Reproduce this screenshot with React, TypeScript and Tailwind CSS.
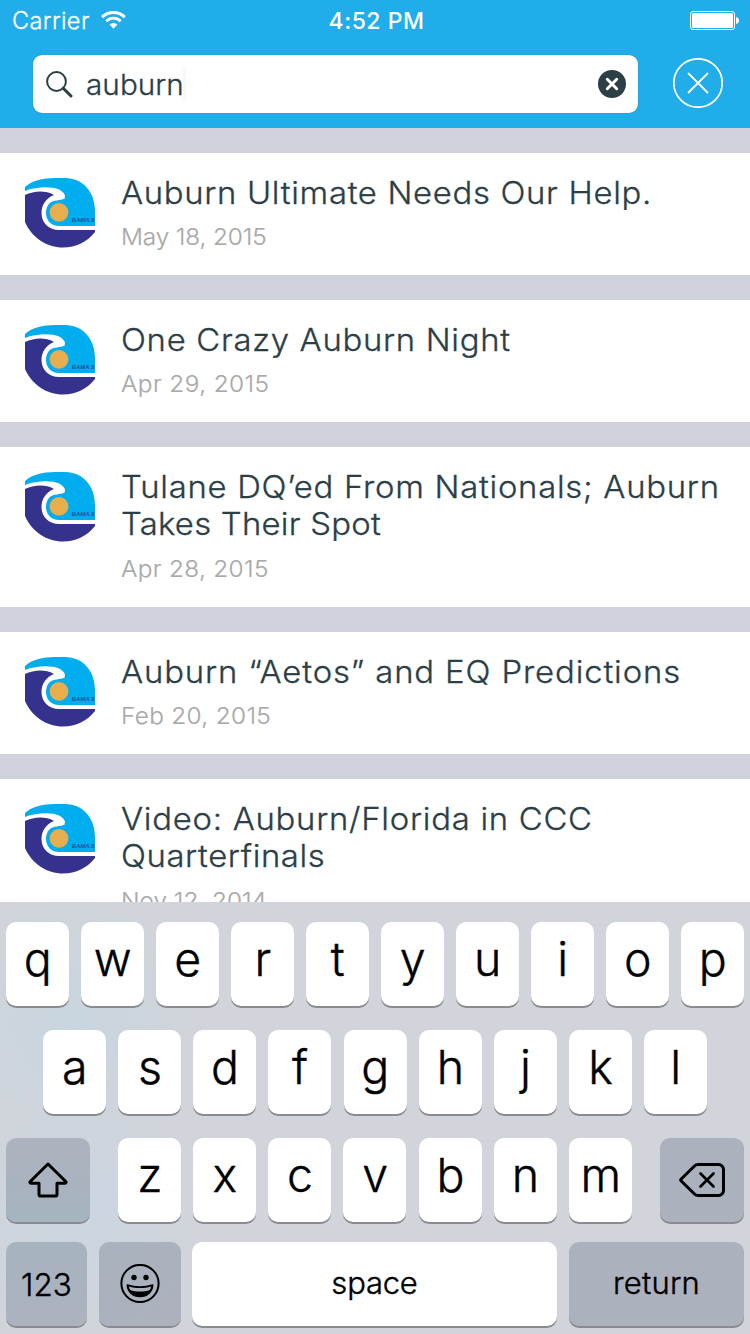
import React from "react";

type Post = { lines: { text: string; track: string }[]; date: string; dateTrack: string; height: string };

const posts: Post[] = [
  { lines: [{ text: "Auburn Ultimate Needs Our Help.", track: "tracking-[0.630px]" }], date: "May 18, 2015", dateTrack: "tracking-[-0.120px]", height: "h-[122px]" },
  { lines: [{ text: "One Crazy Auburn Night", track: "tracking-[0.650px]" }], date: "Apr 29, 2015", dateTrack: "tracking-[0.380px]", height: "h-[122px]" },
  { lines: [{ text: "Tulane DQ’ed From Nationals; Auburn", track: "tracking-[0.680px]" }, { text: "Takes Their Spot", track: "tracking-[0.220px]" }], date: "Apr 28, 2015", dateTrack: "tracking-[0.300px]", height: "h-[160px]" },
  { lines: [{ text: "Auburn “Aetos” and EQ Predictions", track: "tracking-[0.820px]" }], date: "Feb 20, 2015", dateTrack: "tracking-[0.300px]", height: "h-[122px]" },
  { lines: [{ text: "Video: Auburn/Florida in CCC", track: "tracking-[0.680px]" }, { text: "Quarterfinals", track: "tracking-[0.560px]" }], date: "Nov 12, 2014", dateTrack: "tracking-[-0.020px]", height: "h-[160px]" },
];

function Logo() {
  return (
    <svg viewBox="0 0 70 70" className="h-[70px] w-[70px] shrink-0">
      <path d="M0 9C6 3 18 0 30 0h10C58 0 70 14 70 33v15H34C26 48 21 42 21 35C21 28 25 23 31 22.500L38.500 21C42 18.500 39 14 34 11.500C26 8 10 9 0 13Z" fill="#00adee" />
      <path d="M31 22.500C28 20.500 31 17.500 36 17L40 20.500L38.500 21Z" fill="#fff" />
      <path d="M0 17C9 13 20 12 29 17C21 20 16.500 27 16.500 35C16.500 45 24 52 34 52H70V54C62 64 51 69.500 38 69.500C22 69.500 7 60 0 44Z" fill="#35328e" />
      <circle cx="34" cy="34.300" r="9.400" fill="#e8ad4d" />
      <text x="46.800" y="44" fontFamily="Liberation Sans, sans-serif" fontSize="5.700" fontWeight="bold" fontStyle="italic" fill="#24519e" textLength="23" lengthAdjust="spacingAndGlyphs">BAMA S</text>
    </svg>
  );
}

function PostCard({ post }: { post: Post }) {
  return (
    <article className={`flex shrink-0 items-start bg-white pt-[25px] pl-[25px] ${post.height}`}>
      <Logo />
      <div className="-mt-[4px] ml-[25.500px] origin-left scale-x-[1.06] whitespace-nowrap">
        <h2 className="text-[31px] leading-[37px] font-light text-[#2c3e46] [-webkit-text-stroke:0.3px_#2c3e46]">
          {post.lines.map((line) => (
            <span key={line.text} className={`block ${line.track}`}>{line.text}</span>
          ))}
        </h2>
        <p className={`text-[23px] leading-[28px] font-light text-[#a9a9a9] [-webkit-text-stroke:0.2px_#a9a9a9] ${post.lines.length > 1 ? "mt-[13px]" : "mt-[12px]"} ${post.dateTrack}`}>{post.date}</p>
      </div>
    </article>
  );
}

function Key({ children, className = "w-[63px] bg-white pb-[9px] text-[46.500px] tracking-[-0.500px]" }: { children?: React.ReactNode; className?: string }) {
  return (
    <div className={`flex h-[84px] shrink-0 items-center justify-center rounded-[10px] font-light text-black shadow-[0_2px_0_#898b8f] [-webkit-text-stroke:0.4px_black] ${className}`}>
      {children}
    </div>
  );
}

export default function App() {
  return (
    <div className="flex h-[1334px] w-[750px] flex-col overflow-hidden bg-[#cfd2da] font-['Inter',sans-serif]">
      <header className="h-[128px] shrink-0 bg-[#20ade9] text-white">
        <div className="grid h-[40px] grid-cols-3 items-center pr-[11px] pl-[12px] text-[23px]">
          <div className="flex items-center gap-[11px] pt-px">
            <span className="text-[23.500px] font-light tracking-[0.400px] [-webkit-text-stroke:0.3px_white]">Carrier</span>
            <svg viewBox="0 0 25 18" className="-mt-px h-[18px] w-[25px]" fill="none" stroke="#fff">
              <path d="M1.200 6.100a16 16 0 0 1 22.600 0" strokeWidth="3" />
              <path d="M5.300 10.200a10.200 10.200 0 0 1 14.400 0" strokeWidth="2.800" />
              <path d="M12.500 17.700L8.500 13.600a5.700 5.700 0 0 1 8 0Z" fill="#fff" stroke="none" />
            </svg>
          </div>
          <span className="pt-[2px] pl-[2px] text-center font-medium tracking-[0.500px]">4:52 PM</span>
          <svg viewBox="0 0 49 19" className="h-[19px] w-[49px] justify-self-end">
            <rect x="0.500" y="0.500" width="44" height="18" rx="2.500" fill="none" stroke="#fff" />
            <rect x="2" y="2" width="41" height="15" rx="1.500" fill="#fff" />
            <path d="M46 6c2 .5 3 1.500 3 3.500s-1 3-3 3.500Z" fill="#fff" />
          </svg>
        </div>
        <div className="flex items-center pt-[15px] pl-[33px]">
          <div className="flex h-[58px] w-[605px] items-center rounded-[9px] bg-white pr-[12px] pl-[13px] shadow-[0_0_1px_#47616e]">
            <svg viewBox="0 0 27 27" className="h-[27px] w-[27px]" fill="none" stroke="#2c3e46">
              <circle cx="10.500" cy="10.500" r="9.400" strokeWidth="2" />
              <path d="M17.200 17.200L25 25" strokeWidth="3" strokeLinecap="round" />
            </svg>
            <span className="mr-[5px] ml-[13px] origin-left scale-x-[1.06] pt-px text-[28px] font-light tracking-[0.050px] text-[#2c3e46] [-webkit-text-stroke:0.3px_#2c3e46]">auburn</span>
            <span className="h-[30px] w-[3px] bg-[#f6f8f8]" />
            <svg viewBox="0 0 28 28" className="ml-auto h-[28px] w-[28px]">
              <circle cx="14" cy="14" r="14" fill="#2c3e46" />
              <path d="M9.300 9.300l9.400 9.400M18.700 9.300l-9.400 9.400" stroke="#fff" strokeWidth="3" strokeLinecap="round" />
            </svg>
          </div>
          <svg viewBox="0 0 50 50" className="-mt-[3px] ml-[35px] h-[50px] w-[50px]" fill="none" stroke="#fff">
            <circle cx="25" cy="25" r="24.200" strokeWidth="1.700" />
            <path d="M15.500 15.500l19 19M34.500 15.500l-19 19" strokeWidth="1.800" strokeLinecap="round" />
          </svg>
        </div>
      </header>

      <main className="flex h-[774px] shrink-0 flex-col gap-[25px] overflow-hidden pt-[25px]">
        {posts.map((post) => <PostCard key={post.date} post={post} />)}
      </main>

      <section className="flex h-[432px] shrink-0 flex-col gap-[24px] bg-[#d1d4da] bg-[radial-gradient(circle_at_70px_120px,#c8d5df_0,transparent_130px),radial-gradient(circle_at_80px_310px,#cad6e1_0,transparent_120px)] px-[6px] pt-[20px]">
        <div className="flex justify-between">
          {"qwertyuiop".split("").map((letter) => <Key key={letter}>{letter}</Key>)}
        </div>
        <div className="flex justify-between px-[37px]">
          {"asdfghjkl".split("").map((letter) => <Key key={letter}>{letter}</Key>)}
        </div>
        <div className="flex justify-between">
          <Key className="w-[84px] bg-linear-to-b from-[#adb2be] to-[#a5b4c0]">
            <svg viewBox="0 0 40 36" className="h-[36px] w-[40px]" fill="none" stroke="#000" strokeWidth="3" strokeLinejoin="round">
              <path d="M20 2L2.500 19.200c-1 1-.7 2 .6 2H11v11c0 1.200.7 1.900 1.900 1.900h14.200c1.200 0 1.900-.7 1.900-1.900v-11h7.900c1.300 0 1.600-1 .6-2Z" />
            </svg>
          </Key>
          <div className="flex w-[514px] justify-between">
            {"zxcvbnm".split("").map((letter) => <Key key={letter}>{letter}</Key>)}
          </div>
          <Key className="w-[84px] bg-[#abb1bd]">
            <svg viewBox="0 0 46 34" className="h-[34px] w-[46px]" fill="none" stroke="#000" strokeWidth="3" strokeLinecap="round" strokeLinejoin="round">
              <path d="M19 1.500h20.500a5 5 0 0 1 5 5v21a5 5 0 0 1-5 5H19c-1.500 0-2.500-.5-3.500-1.500L2.200 18c-.6-.6-.6-1.400 0-2L15.500 3c1-1 2-1.500 3.500-1.500Z" />
              <path d="M21.500 10.500l13 13M34.500 10.500l-13 13" strokeWidth="2.700" />
            </svg>
          </Key>
        </div>
        <div className="-mt-[4px] flex">
          <Key className="w-[81px] bg-linear-to-b from-[#a6b3bf] to-[#adb2bf] pt-[2px] text-[31.500px]">123</Key>
          <Key className="ml-[12px] w-[82px] bg-linear-to-br from-[#a8b2be] to-[#adb1bd]">
            <svg viewBox="0 0 40 40" className="h-[40px] w-[40px]">
              <circle cx="20" cy="19.500" r="18.600" fill="none" stroke="#000" strokeWidth="2" />
              <circle cx="14" cy="13.500" r="2.700" />
              <circle cx="26" cy="13.500" r="2.700" />
              <path d="M7.300 21c8 2.500 17.400 2.500 25.400 0C32.300 28 27 32.500 20 32.500S7.700 28 7.300 21Z" stroke="#000" strokeWidth="1.500" strokeLinejoin="round" />
              <path d="M8.800 22.500c7 2 15.400 2 22.400 0-.4 1.600-.8 2.500-1.500 3.500-6 2-13.400 2-19.400 0-.7-1-1.200-2-1.500-3.500Z" fill="#abb2be" />
            </svg>
          </Key>
          <Key className="ml-[11px] w-[365px] bg-white pb-[2px] text-[31px] tracking-[-0.200px]">space</Key>
          <Key className="ml-[12px] w-[175px] bg-[#abb1bd] pb-[2px] text-[31px] tracking-[0.200px]">return</Key>
        </div>
      </section>
    </div>
  );
}
